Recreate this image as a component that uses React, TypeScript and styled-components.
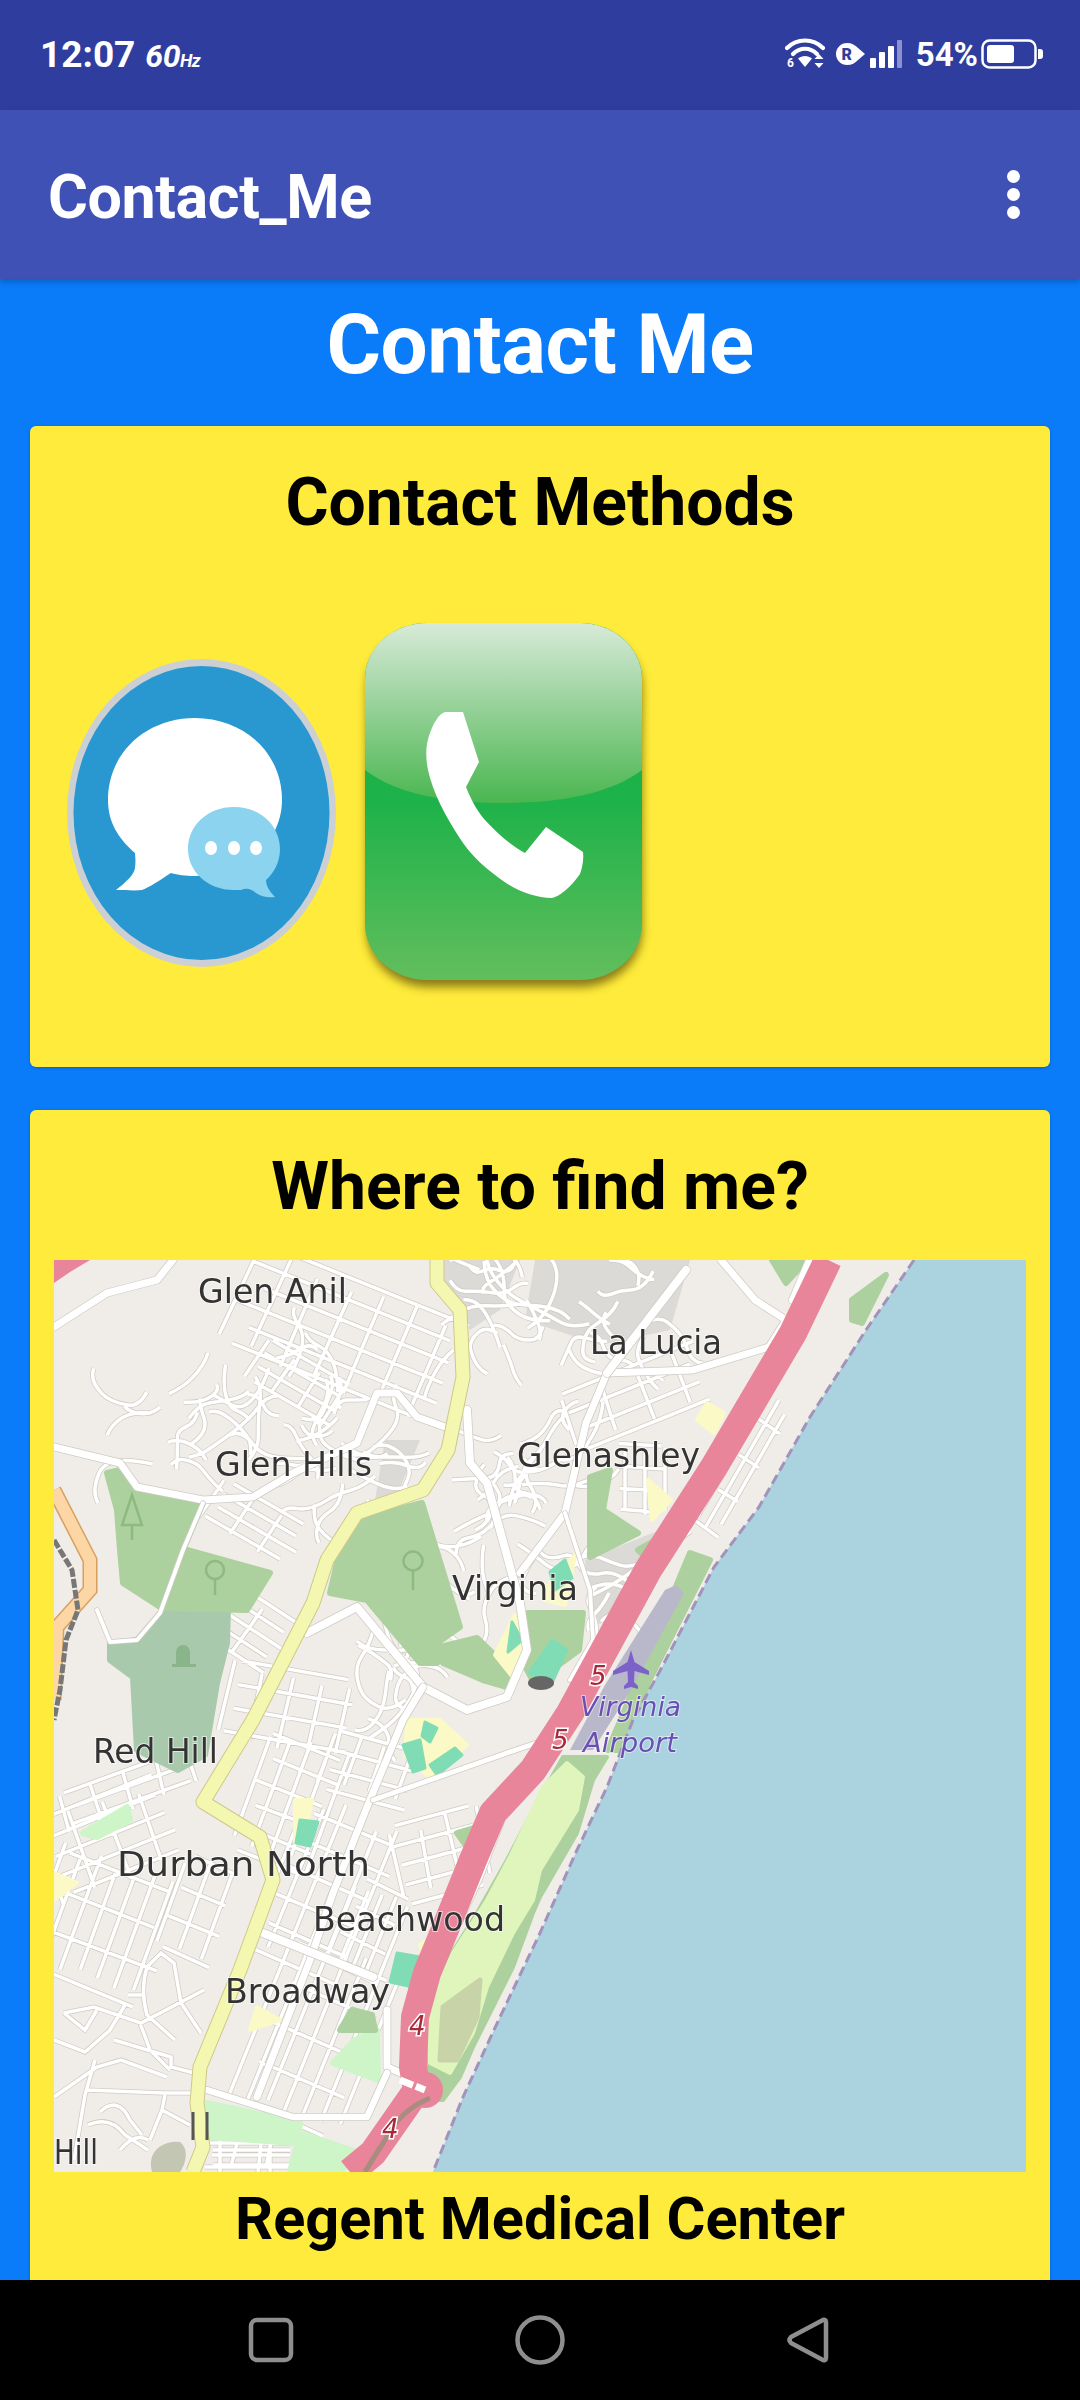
import React from "react";
import styled, { createGlobalStyle } from "styled-components";

const Global = createGlobalStyle`
  html, body { margin: 0; padding: 0; background: #000; }
  body { font-family: Roboto, "Liberation Sans", sans-serif; }
`;
const Page = styled.div`
  width: 1080px; height: 2400px; overflow: hidden;
  display: flex; flex-direction: column; background: #0a7bf9;
`;
const StatusBar = styled.div`
  height: 110px; flex: none; background: #2f3e9e; color: #fff;
  display: flex; align-items: center; justify-content: space-between;
  padding: 0 37px 0 40px; box-sizing: border-box;
`;
const StatusLeft = styled.div`display: flex; align-items: baseline; gap: 10px; margin-top: -2px;`;
const StatusRight = styled.div`display: flex; align-items: center; gap: 0; margin-top: -2px;`;
const Clock = styled.span`font-size: 37px; font-weight: 700;`;
const Rate = styled.span`font-size: 32px; font-weight: 700; font-style: italic; letter-spacing: -0.5px;`;
const RateUnit = styled.span`font-size: 18px;`;
const Percent = styled.span`font-size: 33px; font-weight: 700; margin: 0 3px 0 14px;`;
const WifiSlot = styled.span`display: flex; margin-right: 11px;`;
const RoamSlot = styled.span`display: flex; margin-right: 4px;`;
const AppBar = styled.header`
  height: 169px; flex: none; background: #3f51b5; color: #fff; position: relative; z-index: 2;
  display: flex; align-items: center; justify-content: space-between;
  padding: 0 60px 0 48px; box-sizing: border-box;
  box-shadow: 0 3px 6px rgba(0,0,0,.22);
`;
const AppTitle = styled.h1`margin: 6px 0 0; font-size: 61px; font-weight: 700; line-height: 1; letter-spacing: -0.4px;`;
const Menu = styled.div`display: flex; flex-direction: column; gap: 5px; margin-top: -1px;`;
const MenuDot = styled.span`width: 13px; height: 13px; border-radius: 50%; background: #fff;`;
const Content = styled.main`flex: 1; min-height: 0; overflow: hidden; padding: 0 30px; display: flex; flex-direction: column;`;
const PageTitle = styled.h2`
  margin: 16px 0 31px; text-align: center; color: #fff;
  font-size: 83.5px; line-height: 100px; font-weight: 700; letter-spacing: -0.5px; flex: none;
`;
const Card = styled.section<{ $height?: number }>`
  background: #ffeb3b; border-radius: 6px; flex: none; box-sizing: border-box;
  padding: 37px 24px 60px; ${(p) => (p.$height ? `height: ${p.$height}px;` : "")}
  margin-bottom: 43px; box-shadow: 0 1px 3px rgba(0,0,0,.2);
`;
const CardTitle = styled.h3`
  margin: 0; text-align: center; color: #000;
  font-size: 66px; line-height: 80px; font-weight: 700;
`;
const IconRow = styled.div`display: flex; align-items: center; gap: 19px; margin: 72px 0 0 13px;`;
const MapFrame = styled.div`margin-top: 33px; width: 972px; height: 912px; overflow: hidden;`;
const MapSvg = styled.svg`display: block; width: 972px; height: 912px; filter: blur(0.7px);`;
const Place = styled.text`
  font-family: "DejaVu Sans", "Noto Sans", sans-serif; font-size: 34px; fill: #333;
  stroke: rgba(255,255,255,.6); stroke-width: 2px; paint-order: stroke;
`;
const AirportLabel = styled.text`
  font-family: "DejaVu Sans", "Noto Sans", sans-serif; font-size: 27px; font-style: italic; fill: #6a4fb5;
  stroke: rgba(255,255,255,.5); stroke-width: 2px; paint-order: stroke;
`;
const Shield = styled.text`
  font-family: "DejaVu Sans", sans-serif; font-size: 26px; font-style: italic; font-weight: 400; fill: #a82a38;
  stroke: #fff; stroke-width: 3px; paint-order: stroke;
`;
const Caption = styled.p`
  margin: 7px 0 0; text-align: center; color: #000;
  font-size: 59.5px; line-height: 80px; font-weight: 700;
`;
const NavBar = styled.nav`
  height: 120px; flex: none; background: #000; position: relative; z-index: 2;
  display: flex; align-items: center; justify-content: center; gap: 0;
`;
const NavSlot = styled.div`width: 269px; display: flex; justify-content: center; margin-top: -1px;`;

const StatusIcons = {
  Wifi: () => (
    <svg width="40" height="34" viewBox="0 0 40 34" fill="none">
      <g stroke="#fff" strokeWidth="4.2" strokeLinecap="round">
        <path d="M2 11C12 1 28 1 38 11" />
        <path d="M8 17C15 10 25 10 32 17" />
      </g>
      <path d="M13 21.5C17 18 23 18 27 21.5L20 30Z" fill="#fff" />
      <text x="2" y="30" fill="#fff" fontSize="12" fontWeight="700" fontFamily="Roboto">6</text>
      <path d="M36 17l-4.500 5h9zM36 31l-4.500-5h9z" fill="#fff" transform="translate(-2 0)" />
    </svg>
  ),
  Roam: () => (
    <svg width="30" height="22" viewBox="0 0 30 22">
      <path d="M11 0C16 0 19 2 22 5L29 11L22 17C19 20 16 22 11 22A11 11 0 0 1 11 0Z" fill="#fff" />
      <text x="5.500" y="17" fill="#2f3e9e" fontSize="16" fontWeight="900" fontFamily="Roboto">R</text>
    </svg>
  ),
  Signal: () => (
    <svg width="32" height="28" viewBox="0 0 32 28" fill="#fff">
      <rect x="0" y="18" width="6" height="10" rx="1" />
      <rect x="9" y="12" width="6" height="16" rx="1" />
      <rect x="18" y="6" width="6" height="22" rx="1" />
      <rect x="27" y="0" width="5" height="28" rx="1" fill="#8a93cf" />
    </svg>
  ),
  Battery: () => (
    <svg width="62" height="30" viewBox="0 0 62 30">
      <rect x="1.500" y="1.500" width="53" height="27" rx="7" fill="none" stroke="#fff" strokeWidth="2.500" />
      <rect x="6" y="6" width="27" height="18" rx="3" fill="#fff" />
      <path d="M57 10h2a3 3 0 0 1 3 3v4a3 3 0 0 1-3 3h-2z" fill="#fff" />
    </svg>
  ),
};

const MessageIcon = () => (
  <svg width="269" height="308" viewBox="67 659 269 308">
    <ellipse cx="201.500" cy="813" rx="134.500" ry="154" fill="#ccd0d4" />
    <ellipse cx="201.500" cy="813" rx="128" ry="147" fill="#2a98d0" />
    <path d="M195 718C243 718 282 752 282 800C282 845 240 876 195 876C185 876 178 875 171 873C160 880 150 887 142 890C135 891 125 890 116 890C126 882 134 875 135 868C136 860 135 855 135 853C118 838 108 822 108 800C108 752 147 718 195 718Z" fill="#fff" />
    <path d="M234 807C261 807 280 826 280 849C280 862 274 873 266 880C266 886 270 892 275 897C268 898 262 897 256 893C250 888 246 888 241 890C238 890 236 890 234 890C207 890 188 871 188 849C188 826 207 807 234 807Z" fill="#8bd3ef" />
    <ellipse cx="211" cy="848" rx="6" ry="7" fill="#fff" />
    <ellipse cx="234" cy="848" rx="6" ry="7" fill="#fff" />
    <ellipse cx="256" cy="848" rx="6" ry="7" fill="#fff" />
  </svg>
);

const PhoneIcon = () => (
  <svg width="297" height="396" viewBox="355 615 297 396">
    <defs>
      <linearGradient id="phoneBody" x1="0" y1="0" x2="0" y2="1">
        <stop offset="0" stopColor="#12ae48" />
        <stop offset="0.5" stopColor="#1eb24a" />
        <stop offset="1" stopColor="#62be5c" />
      </linearGradient>
      <linearGradient id="phoneGloss" x1="0" y1="0" x2="0" y2="1">
        <stop offset="0" stopColor="#d8ead8" />
        <stop offset="1" stopColor="#4ab650" />
      </linearGradient>
      <filter id="phoneShadow" x="-15%" y="-15%" width="130%" height="130%">
        <feGaussianBlur stdDeviation="5" />
      </filter>
    </defs>
    <rect x="367" y="632" width="275" height="355" rx="62" ry="56" fill="#6b5d10" opacity=".8" filter="url(#phoneShadow)" />
    <rect x="365" y="623" width="277" height="357" rx="62" ry="56" fill="url(#phoneBody)" />
    <path d="M365 770V679C365 648 392 623 427 623H580C614 623 642 648 642 679V770C610 794 560 803 503 803C446 803 396 794 365 770Z" fill="url(#phoneGloss)" />
    <path d="M445 712H463L479 762L466 787C472 802 478 812 485 820C497 833 510 845 525 853L546 827L583 852C584 860 582 868 580 874C570 888 560 896 552 898C537 898 520 892 506 883C487 870 470 855 459 837C445 815 433 793 428 770C425 755 426 743 430 733C434 722 439 714 445 712Z" fill="#fff" />
  </svg>
);

function rng(seed: number) {
  let s = seed * 7919;
  return () => {
    s = (s * 16807) % 2147483647;
    return (s - 1) / 2147483646;
  };
}
function grid(seed: number, cx: number, cy: number, w: number, h: number, deg: number, sx: number, sy: number) {
  const r = rng(seed);
  const a = (deg * Math.PI) / 180;
  const c = Math.cos(a), s = Math.sin(a);
  const P = (u: number, v: number) => `${(cx + u * c - v * s).toFixed(1)} ${(cy + u * s + v * c).toFixed(1)}`;
  let d = "";
  for (let v = -h / 2; v <= h / 2; v += sx) {
    const u0 = -w / 2 + r() * w * 0.12, u1 = w / 2 - r() * w * 0.12;
    d += `M${P(u0, v)}L${P(u1, v)}`;
  }
  for (let u = -w / 2; u <= w / 2; u += sy) {
    const v0 = -h / 2 + r() * h * 0.15, v1 = h / 2 - r() * h * 0.15;
    d += `M${P(u + r() * 3, v0)}L${P(u - r() * 3, v1)}`;
  }
  return d;
}
function curvy(seed: number, cx: number, cy: number, rad: number, n: number) {
  const r = rng(seed);
  let d = "";
  for (let i = 0; i < n; i++) {
    let x = cx + (r() - 0.5) * rad * 2, y = cy + (r() - 0.5) * rad * 2;
    let ang = r() * 6.28;
    d += `M${x.toFixed(1)} ${y.toFixed(1)}`;
    const steps = 2 + Math.floor(r() * 3);
    for (let k = 0; k < steps; k++) {
      const a2 = ang + (r() - 0.5) * 3, len = 9 + r() * 12;
      const qx = x + Math.cos(ang) * len, qy = y + Math.sin(ang) * len;
      x = qx + Math.cos(a2) * len * 0.7;
      y = qy + Math.sin(a2) * len * 0.7;
      ang = a2;
      d += `Q${qx.toFixed(1)} ${qy.toFixed(1)} ${x.toFixed(1)} ${y.toFixed(1)}`;
    }
  }
  return d;
}
const minor = [
  grid(11, 345, 1335, 230, 110, 22, 21, 34),
  curvy(12, 285, 1410, 65, 18),
  curvy(13, 170, 1420, 45, 12),
  curvy(14, 345, 1480, 38, 12),
  grid(15, 255, 1525, 100, 50, 30, 14, 34),
  grid(16, 245, 1625, 90, 60, 33, 15, 50),
  curvy(17, 495, 1310, 50, 14),
  curvy(18, 600, 1300, 65, 16),
  grid(19, 640, 1395, 150, 60, -22, 20, 40),
  curvy(20, 530, 1470, 40, 14),
  grid(21, 640, 1480, 70, 50, 90, 20, 22),
  grid(22, 745, 1465, 150, 30, -60, 12, 40),
  curvy(23, 495, 1560, 42, 14),
  curvy(24, 610, 1590, 32, 8),
  curvy(25, 390, 1690, 40, 12),
  grid(26, 290, 1710, 130, 80, 10, 24, 30),
  grid(27, 370, 1770, 90, 60, 15, 20, 26),
  grid(28, 110, 1840, 130, 90, -22, 20, 36),
  grid(29, 290, 1800, 130, 80, -70, 20, 24),
  grid(39, 130, 1790, 140, 40, -20, 16, 34),
  grid(30, 440, 1855, 90, 80, -15, 20, 30),
  grid(31, 105, 1925, 130, 130, -70, 19, 40),
  grid(40, 200, 1910, 100, 60, -70, 24, 32),
  grid(32, 330, 1890, 170, 110, -68, 19, 30),
  grid(33, 320, 2030, 190, 120, -68, 19, 42),
  grid(36, 250, 2155, 100, 24, 0, 12, 34),
  grid(37, 370, 1930, 90, 60, -68, 14, 30),
  grid(38, 300, 1385, 100, 50, 30, 15, 30),
  "M147 1967L161 1953L174 1963L181 2003L201 2033",
  "M147 1967Q140 1990 147 2015L175 2040",
  "M64 2013L94 2007L141 2023L204 1990",
  "M64 2013L85 2030L97 2010",
  "M114 2040L171 2057L171 2067L194 2073",
  "M54 2097L97 2067L121 2060L167 2077",
  "M87 2090L164 2093L192 2093",
  "M85 2095L74 2160M100 2112Q118 2095 130 2120L142 2135",
  "M88 2125Q110 2115 125 2135L148 2150M120 2150Q135 2132 148 2140",
  "M165 2095L162 2110L190 2125M162 2110L150 2140",
  "M54 2040L85 2052L110 2030L125 2005M95 2060L85 2095",
  "M128 1995H145M140 2023L150 2050L170 2070",
  "M213 2135H262L258 2172M213 2150H290M220 2135V2172M270 2140V2172M213 2165H290",
].join("");
const major = [
  ["M54 1327L107 1293L157 1280L173 1260", 7],
  ["M54 1447L120 1463L137 1487L203 1500L253 1497L293 1473L357 1443L377 1393L397 1393L417 1417L445 1427", 7],
  ["M203 1503L183 1550L160 1613L137 1640L110 1642L97 1610", 4],
  ["M307 1633L357 1607L423 1687L467 1710L507 1697L527 1650L520 1603L487 1483L470 1463L467 1410", 8],
  ["M423 1687L403 1720L367 1807L333 1893L310 1960L257 2097", 7],
  ["M373 1800L507 1753L560 1735", 5],
  ["M263 1933L373 1977", 8],
  ["M387 2010L387 2067L417 2080", 7],
  ["M207 2090L293 2117L367 2117L387 2073", 6.500],
  ["M721 1260L755 1300L786 1320L769 1347L693 1370L607 1373L586 1423L565 1513L520 1573", 7],
  ["M607 1373L686 1270", 8],
  ["M810 1260L793 1300", 8],
  ["M565 1513L590 1590L593 1640L570 1680", 4],
  ["M503 1820L480 1880L443 1960", 3.500],
] as [string, number][];
const greens = [
  "107,1473 120,1470 137,1490 203,1503 183,1550 160,1607 123,1583 120,1550 117,1510",
  "187,1550 270,1573 247,1610 163,1608",
  "357,1520 422,1503 460,1627 437,1643 437,1663 420,1663 367,1600 330,1593 340,1550",
  "440,1647 477,1638 507,1667 507,1687 483,1680 443,1663",
  "528,1613 583,1613 579,1650 534,1683 522,1660",
  "772,1260 807,1260 786,1283",
  "852,1300 886,1275 862,1323 852,1320",
  "590,1477 610,1470 603,1510 638,1533 590,1557",
  "638,1550 669,1533 652,1563",
  "690,1553 710,1560 648,1683 628,1750 608,1750",
  "457,1833 477,1827 467,1847",
  "352,2010 372,2015 375,2030 340,2030",
];
const lightGreen = [
  "333,2063 355,2040 377,2030 378,2080",
  "207,2103 300,2123 297,2143 207,2137",
  "300,2133 360,2153 340,2172 290,2172",
  "83,1833 127,1807 130,1820 97,1837",
];
const yellow = [
  "707,1403 724,1413 714,1433 697,1420",
  "648,1480 671,1500 652,1520",
  "250,2030 257,2007 280,2020",
  "407,1720 440,1720 467,1745 430,1778 405,1755",
  "54,1873 77,1883 54,1900",
  "295,1800 312,1800 308,1820 295,1842",
  "548,1585 575,1555 565,1605 545,1600",
  "515,1615 528,1650 515,1680 495,1655",
  "420,1945 432,1936 425,1955",
];
const teal = [
  "552,1640 567,1650 552,1683 529,1673",
  "300,1820 318,1822 310,1846 296,1843",
  "397,1953 420,1957 413,1987 390,1982",
  "403,1745 420,1740 425,1768 413,1772",
  "430,1765 455,1748 462,1755 437,1775",
  "425,1722 437,1728 430,1742 422,1736",
  "550,1572 565,1560 572,1578 555,1590",
  "512,1622 522,1640 508,1652",
];
const trunk = "M437 1260L437 1283L460 1310L463 1377L448 1450L423 1490L357 1513L327 1560L313 1603L253 1720L203 1802L260 1837L273 1880L240 1970L200 2067L197 2103L203 2147L193 2172";
const orange = "M54 1490L90 1560L90 1590L57 1627L54 1700";
const motorway = "M828 1260L793 1333L714 1467L648 1570L570 1713L533 1770L493 1813L473 1860L450 1917L427 1973L415 2017L413 2067L417 2090L373 2153L350 2172";
const coast = "M914 1260L866 1330L810 1417L759 1507L714 1567L662 1667L633 1720L607 1787L577 1850L540 1933L500 2017L463 2097L433 2172";

const MapArt = () => (
  <MapSvg viewBox="54 1260 972 912">
    <rect x="54" y="1260" width="972" height="912" fill="#f0ede8" />
    <g fill="#dcdad6">
      <path d="M440 1260H520L500 1310L470 1330L445 1300Z" />
      <path d="M535 1260H690L670 1330L600 1345L525 1320Z" />
      <path d="M385 1440L420 1440L395 1500L375 1500Z" />
      <path d="M585 1560L660 1530L625 1620L590 1625Z" />
    </g>
    <path d={minor} fill="none" stroke="#cfcbc5" strokeWidth="5" />
    <path d={minor} fill="none" stroke="#fff" strokeWidth="3.500" />
    <g strokeLinejoin="round">
      <polygon points="195,1590 228,1607 227,1643 217,1683 205,1755 178,1770 137,1750 133,1677 110,1660 110,1643 137,1640 163,1610" fill="#a9c9ad" stroke="#a9c9ad" strokeWidth="6" />
      {lightGreen.map((p) => <polygon key={p} points={p} fill="#cdf5c8" stroke="#cdf5c8" strokeWidth="6" />)}
      {greens.map((p) => <polygon key={p} points={p} fill="#add19e" stroke="#add19e" strokeWidth="6" />)}
      <polygon points="563,1757 607,1757 593,1780 577,1833 540,1897 533,1913 513,1967 493,2007 473,2047 460,2077 443,2100 430,2100 423,2067 427,2007 443,1967 477,1913 507,1860 533,1810" fill="#add19e" stroke="#add19e" strokeWidth="4" />
      <polygon points="567,1763 583,1777 577,1810 540,1870 533,1900 513,1933 487,1987 473,2033 450,2073 430,2063 428,2007 453,1953 487,1900 510,1857 543,1787" fill="#dff5bc" stroke="#dff5bc" strokeWidth="4" />
      <polygon points="480,1980 443,2007 440,2060 457,2060 477,2017" fill="#c8d3a8" stroke="#c8d3a8" strokeWidth="5" />
      <path d="M152 2172C146 2150 165 2140 180 2142C190 2150 185 2165 180 2172Z" fill="#c4c6b4" />
      {yellow.map((p) => <polygon key={p} points={p} fill="#fbf9c5" stroke="#fbf9c5" strokeWidth="4" />)}
      {teal.map((p) => <polygon key={p} points={p} fill="#7fdcb4" stroke="#7fdcb4" strokeWidth="3" />)}
    </g>
    <ellipse cx="541" cy="1683" rx="13" ry="7" fill="#666" />
    {major.map(([d, w]) => (
      <g key={d} fill="none" strokeLinejoin="round" strokeLinecap="round">
        <path d={d} stroke="#cfcbc4" strokeWidth={w + 1.500} />
        <path d={d} stroke="#fff" strokeWidth={w} />
      </g>
    ))}
    <path d={orange} fill="none" stroke="#d8a060" strokeWidth="15" />
    <path d={orange} fill="none" stroke="#fcd6a4" strokeWidth="12" />
    <path d="M54 1540L72 1570L78 1610L66 1640L60 1690L54 1720" fill="none" stroke="#777" strokeWidth="5" strokeDasharray="9 2" />
    <path d={trunk} fill="none" stroke="#cfc78a" strokeWidth="15" strokeLinejoin="round" />
    <path d={trunk} fill="none" stroke="#f4f7b0" strokeWidth="13" strokeLinejoin="round" />
    <path d="M193 2112V2140M207 2112V2140" stroke="#555" strokeWidth="3" fill="none" />
    <polygon points="676,1585 684,1593 631,1690 593,1750 570,1750 605,1685 665,1590" fill="#b9b8ca" />
    <path d={motorway} fill="none" stroke="#e8859a" strokeWidth="28" strokeLinejoin="round" />
    <path d="M54 1283L70 1272L90 1260L54 1260Z" fill="#e8859a" />
    <circle cx="425" cy="2090" r="18" fill="#e8859a" />
    <path d="M430 2098Q400 2110 385 2140Q375 2155 365 2172" fill="none" stroke="#a98b80" strokeWidth="5" />
    <path d="M400 2080L425 2090" stroke="#fff" strokeWidth="7" strokeDasharray="14 3" fill="none" />
    <path d={coast + "H1026V1260Z"} fill="#aad3df" />
    <path d={coast} fill="none" stroke="#a292bc" strokeWidth="3" strokeDasharray="10 5" />
    <g fill="none" stroke="#8dba80" strokeWidth="2.500">
      <path d="M132 1495L122 1525H142ZM132 1525V1540" />
      <circle cx="413" cy="1561" r="9.500" />
      <path d="M413 1571V1590" />
      <circle cx="215" cy="1570" r="9" />
      <path d="M215 1580V1595" />
    </g>
    <path d="M183 1645a7 7 0 0 1 7 7V1664H196V1667H172V1664H176V1652a7 7 0 0 1 7-7Z" fill="#8ab58a" />
    <path d="M631 1650L634.500 1662L649 1671V1675L634.500 1671L634 1682L638 1686V1689L631 1687L624 1689V1686L628 1682L627.500 1671L613 1675V1671L627.500 1662Z" fill="#7c62c8" />
    <Place x="198" y="1303" textLength="149" lengthAdjust="spacingAndGlyphs">Glen Anil</Place>
    <Place x="215" y="1476" textLength="157" lengthAdjust="spacingAndGlyphs">Glen Hills</Place>
    <Place x="590" y="1354" textLength="132" lengthAdjust="spacingAndGlyphs">La Lucia</Place>
    <Place x="517" y="1467" textLength="183" lengthAdjust="spacingAndGlyphs">Glenashley</Place>
    <Place x="452" y="1600" textLength="126" lengthAdjust="spacingAndGlyphs">Virginia</Place>
    <Place x="93" y="1763" textLength="125" lengthAdjust="spacingAndGlyphs">Red Hill</Place>
    <Place x="117" y="1876" textLength="253" lengthAdjust="spacingAndGlyphs">Durban North</Place>
    <Place x="313" y="1931" textLength="192" lengthAdjust="spacingAndGlyphs">Beachwood</Place>
    <Place x="225" y="2003" textLength="165" lengthAdjust="spacingAndGlyphs">Broadway</Place>
    <Place x="54" y="2164" textLength="44" lengthAdjust="spacingAndGlyphs">Hill</Place>
    <AirportLabel x="580" y="1716" textLength="101" lengthAdjust="spacingAndGlyphs">Virginia</AirportLabel>
    <AirportLabel x="583" y="1752" textLength="94" lengthAdjust="spacingAndGlyphs">Airport</AirportLabel>
    <Shield x="590" y="1685">5</Shield>
    <Shield x="552" y="1749">5</Shield>
    <Shield x="409" y="2035">4</Shield>
    <Shield x="382" y="2138">4</Shield>
  </MapSvg>
);

export default function App() {
  return (
    <Page>
      <Global />
      <StatusBar>
        <StatusLeft>
          <Clock>12:07</Clock>
          <Rate>60<RateUnit>Hz</RateUnit></Rate>
        </StatusLeft>
        <StatusRight>
          <WifiSlot><StatusIcons.Wifi /></WifiSlot>
          <RoamSlot><StatusIcons.Roam /></RoamSlot>
          <StatusIcons.Signal />
          <Percent>54%</Percent>
          <StatusIcons.Battery />
        </StatusRight>
      </StatusBar>
      <AppBar>
        <AppTitle>Contact_Me</AppTitle>
        <Menu><MenuDot /><MenuDot /><MenuDot /></Menu>
      </AppBar>
      <Content>
        <PageTitle>Contact Me</PageTitle>
        <Card $height={641}>
          <CardTitle>Contact Methods</CardTitle>
          <IconRow>
            <MessageIcon />
            <PhoneIcon />
          </IconRow>
        </Card>
        <Card>
          <CardTitle>Where to find me?</CardTitle>
          <MapFrame><MapArt /></MapFrame>
          <Caption>Regent Medical Center</Caption>
        </Card>
      </Content>
      <NavBar>
        <NavSlot>
          <svg width="46" height="46" viewBox="0 0 46 46" fill="none"><rect x="3" y="3" width="40" height="40" rx="6" stroke="#8e8e8e" strokeWidth="4.500" /></svg>
        </NavSlot>
        <NavSlot>
          <svg width="50" height="50" viewBox="0 0 50 50" fill="none"><circle cx="25" cy="25" r="22.500" stroke="#8e8e8e" strokeWidth="4.500" /></svg>
        </NavSlot>
        <NavSlot>
          <svg width="46" height="46" viewBox="0 0 46 46" fill="none"><path d="M40 5C40 3 38 2 36 3.500L5 20C3 22 3 24 5 26L36 42.500C38 44 40 43 40 41Z" stroke="#8e8e8e" strokeWidth="4.500" strokeLinejoin="round" /></svg>
        </NavSlot>
      </NavBar>
    </Page>
  );
}
